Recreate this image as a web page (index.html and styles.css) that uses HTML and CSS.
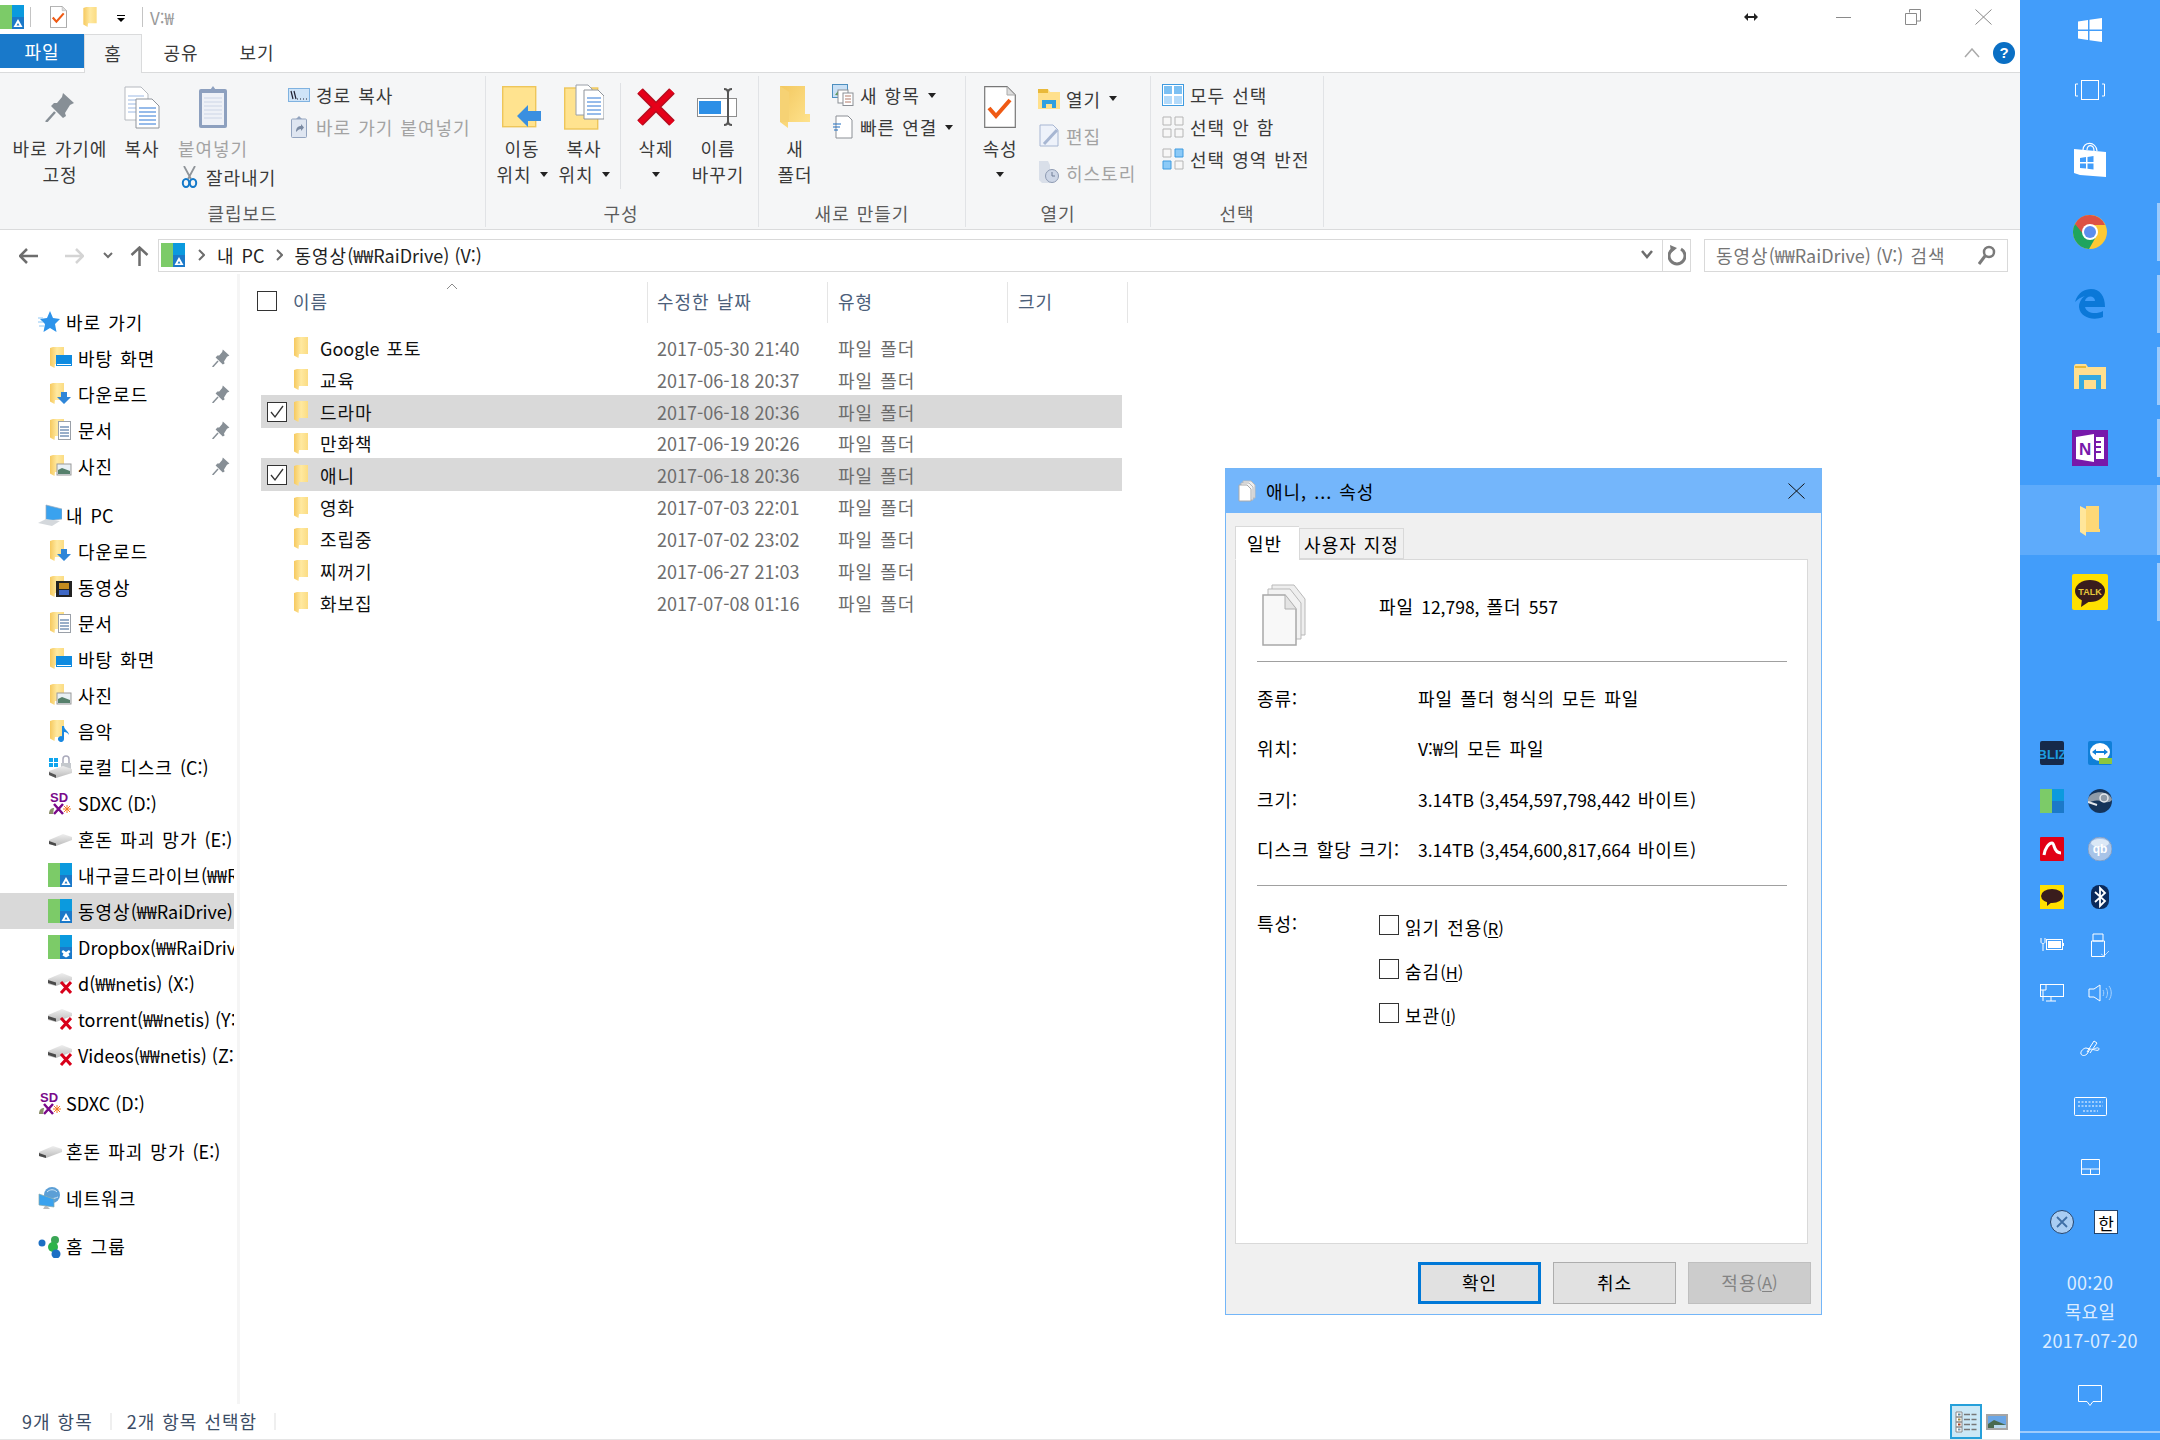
FILE: index.html
```html
<!DOCTYPE html>
<html lang="ko">
<head>
<meta charset="utf-8">
<title>V:₩</title>
<link rel="stylesheet" href="styles.css">
</head>
<body>
<svg class="sprite" aria-hidden="true">
  <defs>
    <linearGradient id="fg" x1="0" x2="1" y1="0" y2="0"><stop offset="0" stop-color="#f6c95f"/><stop offset=".5" stop-color="#ffe9a0"/><stop offset="1" stop-color="#fbdc83"/></linearGradient>
    <linearGradient id="fg2" x1="0" x2="1" y1="0" y2="1"><stop offset="0" stop-color="#f3c860"/><stop offset="1" stop-color="#ffe490"/></linearGradient>
    <linearGradient id="silver" x1="0" x2="0" y1="0" y2="1"><stop offset="0" stop-color="#eee"/><stop offset="1" stop-color="#bbb"/></linearGradient>
  </defs>
  <symbol id="folder" viewBox="0 0 14 21"><path d="M0 1L3 0H14V17H5L4.500 21L0 18.500Z" fill="url(#fg)"/></symbol>
  <symbol id="raid" viewBox="0 0 24 24"><rect width="12" height="24" fill="#7ccb68"/><rect x="12" width="12" height="24" fill="#0b9ade"/><rect x="12" y="12" width="12" height="12" fill="#1b79c9"/><path d="M18 14l4.500 8h-9z" fill="#fff"/><path d="M18 18l-1.500 2.500h3z" fill="#1b79c9"/></symbol>
  <symbol id="raidbox" viewBox="0 0 24 24"><rect width="12" height="24" fill="#7ccb68"/><rect x="12" width="12" height="24" fill="#0b9ade"/><rect x="12" y="12" width="12" height="12" fill="#1b79c9"/><path d="M15 15l3 2 3-2 1.500 2-2 1.500 1 2-3.500 2-3.500-2 1-2-2-1.500z" fill="#fff"/></symbol>
  <symbol id="raidtray" viewBox="0 0 24 24"><rect width="12" height="24" fill="#7ccb68"/><rect x="12" width="12" height="12" fill="#0b9ade"/><rect x="12" y="12" width="12" height="12" fill="#1b79c9"/></symbol>
  <symbol id="pin" viewBox="0 0 30 30"><path d="M18 1L29 11L25 13L20 21L21 24L18 26L6 14L9 11L12 11L17 5Z" fill="#878f96"/><path d="M10 20L1 30" stroke="#878f96" stroke-width="2.500"/></symbol>
  <symbol id="copy" viewBox="0 0 36 43"><path d="M1 1H17L24 8V34H1Z" fill="#fff" stroke="#b5b9bf"/><path d="M4 10H20M4 14H20M4 18H20M4 22H20M4 26H20" stroke="#9cb9e4"/><path d="M12 13H28L35 20V42H12Z" fill="#fff" stroke="#8f949b"/><path d="M15 22H32M15 26H32M15 30H32M15 34H32M15 38H32" stroke="#2f79d6" stroke-width="1.200"/></symbol>
  <symbol id="paste" viewBox="0 0 30 44"><rect x="1" y="4" width="28" height="39" rx="2" fill="#8da0bf"/><rect x="4" y="8" width="22" height="32" fill="#eef1f7"/><path d="M6 13H24M6 17H24M6 21H24M6 25H24M6 29H24M6 33H24" stroke="#ccd5e6"/><path d="M10 8L15 1L20 8Z" fill="#8da0bf"/></symbol>
  <symbol id="pathcopy" viewBox="0 0 22 14"><rect x=".500" y=".500" width="21" height="13" fill="#cfe4f8" stroke="#7fb2e0"/><path d="M3 3l2 8M6 3l2 8M9 11h1M12 11h1M15 11h1M18 11h1" stroke="#223" stroke-width="1.200"/></symbol>
  <symbol id="linkpaste" viewBox="0 0 16 22"><rect x=".500" y="3" width="15" height="18.500" rx="1" fill="#dfe6f1" stroke="#93a4bf"/><path d="M5 3l3-3 3 3z" fill="#93a4bf"/><path d="M5 16c0-4 2-6 5-6V8l3 3.500-3 3.500v-2c-2 0-3 1-5 3z" fill="#7a8aa2"/></symbol>
  <symbol id="scissors" viewBox="0 0 17 22"><path d="M3 0L10 13M14 0L7 13" stroke="#8f9499" stroke-width="1.800" fill="none"/><ellipse cx="5" cy="17" rx="3.200" ry="4" fill="none" stroke="#1479c9" stroke-width="2"/><ellipse cx="12" cy="17" rx="3.200" ry="4" fill="none" stroke="#1479c9" stroke-width="2"/></symbol>
  <symbol id="move" viewBox="0 0 40 42"><rect x=".700" y=".700" width="33" height="40" fill="#ffe38f" stroke="#eec65a" stroke-width="1.400"/><path d="M15 30L26 19V25H39V35H26V41Z" fill="#3a8fe0"/></symbol>
  <symbol id="copyto" viewBox="0 0 40 46"><rect x=".700" y="4" width="33" height="41" fill="#ffe38f" stroke="#eec65a" stroke-width="1.400"/><path d="M12 1H24L28 5V31H12Z" fill="#fff" stroke="#9aa0a8"/><path d="M20 6H34L40 12V35H20Z" fill="#fff" stroke="#8f949b"/><path d="M23 14H37M23 18H37M23 22H37M23 26H37M23 30H37" stroke="#2f79d6"/></symbol>
  <symbol id="del" viewBox="0 0 38 38"><path d="M3 3L35 35M35 3L3 35" stroke="#b50d1f" stroke-width="8"/><path d="M3 3L35 35M35 3L3 35" stroke="#e60019" stroke-width="5"/></symbol>
  <symbol id="rename" viewBox="0 0 43 38"><rect x=".500" y="10.500" width="39" height="18" fill="#fff" stroke="#8d8d8d"/><rect x="2" y="13" width="22" height="13" fill="#2d8fe6"/><path d="M27 1C29 1 31 2 31 5V33C31 36 29 37 27 37M35 1C33 1 31 2 31 5M35 37C33 37 31 36 31 33" fill="none" stroke="#555" stroke-width="2"/></symbol>
  <symbol id="newfolder" viewBox="0 0 30 42"><path d="M0 0H25V28H30V36H8V42L0 36Z" fill="url(#fg2)"/><path d="M0 0L9 6V36L0 36Z" fill="#f6d274"/></symbol>
  <symbol id="newitem" viewBox="0 0 22 22"><rect x=".500" y=".500" width="15" height="13" fill="#c9e0f5" stroke="#4d8fbf"/><path d="M3 11l3-4 3 3 2-2 3 4z" fill="#5b9a5b"/><rect x="6" y="6" width="10" height="13" fill="#fff" stroke="#8b8f95"/><rect x="11" y="9" width="10" height="12.500" fill="#fff" stroke="#8b8f95"/><path d="M13 12h6M13 15h6M13 18h6" stroke="#b37a6a"/></symbol>
  <symbol id="quick" viewBox="0 0 20 24"><path d="M3 1H15L19 5V23H3Z" fill="#fff" stroke="#8b8f95"/><path d="M0 9H8M0 12H7M1 15H5" stroke="#1c6dc0" stroke-width="1.200"/></symbol>
  <symbol id="props" viewBox="0 0 32 42"><path d="M.700.700H23L31.300 9V41.300H.700Z" fill="#fff" stroke="#777" stroke-width="1.200"/><path d="M23 1V9H31" fill="#ddd" stroke="#aaa"/><path d="M5 22L12 30L26 14" fill="none" stroke="#ef5a14" stroke-width="4"/></symbol>
  <symbol id="open" viewBox="0 0 22 20"><path d="M0 0H10L12 3H22V20H0Z" fill="#ffe08c"/><rect x="0" y="0" width="10" height="4" fill="#e9b93a"/><path d="M4 19V11H18V19H14V15H8V19Z" fill="#2f9fe0"/></symbol>
  <symbol id="edit" viewBox="0 0 20 23"><path d="M1 1H14L19 6V22H1Z" fill="#eef2fa" stroke="#a7b6d2"/><path d="M5 20L18 6" stroke="#a7b6d2" stroke-width="3"/></symbol>
  <symbol id="history" viewBox="0 0 20 23"><path d="M0 0H9L11 4V22H3L0 19Z" fill="#d9dfe9"/><circle cx="13" cy="15" r="6.500" fill="#cdd6e6" stroke="#8d9ab2"/><path d="M13 11v4h3" stroke="#6f7d96" fill="none"/></symbol>
  <symbol id="selall" viewBox="0 0 22 22"><rect x=".500" y=".500" width="21" height="21" fill="#fff" stroke="#3f9be0"/><rect x="2" y="2" width="8" height="8" fill="#7cc0f3"/><rect x="12" y="2" width="8" height="8" fill="#7cc0f3"/><rect x="2" y="12" width="8" height="8" fill="#b3dafa"/><rect x="12" y="12" width="8" height="8" fill="#b3dafa"/></symbol>
  <symbol id="selnone" viewBox="0 0 22 22"><path d="M1 1h8v8H1zM13 1h8v8h-8zM1 13h8v8H1zM13 13h8v8h-8z" fill="#f7f7f7" stroke="#b5b5b5"/></symbol>
  <symbol id="selinv" viewBox="0 0 22 22"><path d="M1 1h8v8H1zM13 13h8v8h-8z" fill="#f7f7f7" stroke="#b5b5b5"/><path d="M13 1h8v8h-8zM1 13h8v8H1z" fill="#8ccaf7" stroke="#3f9be0"/></symbol>
  <symbol id="star" viewBox="0 0 24 22"><path d="M12 0L15 7L22 8L17 13L18.500 21L12 17L5.500 21L7 13L2 8L9 7Z" fill="#2d93ea"/><path d="M0 7H5M0 11H5M1 15H6" stroke="#8cc6f5"/></symbol>
  <symbol id="fdesk" viewBox="0 0 22 22"><use href="#folder" width="14" height="21"/><rect x="6" y="8" width="16" height="11" fill="#0f8be0"/><rect x="7" y="17" width="14" height="1" fill="#fff"/></symbol>
  <symbol id="fdown" viewBox="0 0 22 22"><use href="#folder" width="14" height="21"/><path d="M11 9h6v5h4l-7 7-7-7h4z" fill="#2f86d8"/></symbol>
  <symbol id="fdoc" viewBox="0 0 22 22"><use href="#folder" width="14" height="21"/><rect x="8.500" y="2.500" width="12" height="18" fill="#fff" stroke="#9aa0a8"/><path d="M10 8h9M10 11h9M10 14h9M10 17h9" stroke="#335f93"/></symbol>
  <symbol id="fpic" viewBox="0 0 22 22"><use href="#folder" width="14" height="21"/><rect x="7" y="9" width="14" height="11" fill="#e8f0f4" stroke="#9a9a9a"/><path d="M8 19v-4l4-2 8 3v3z" fill="#56806c"/></symbol>
  <symbol id="fvid" viewBox="0 0 22 22"><use href="#folder" width="14" height="21"/><rect x="6" y="5" width="16" height="16" fill="#222"/><rect x="9" y="7" width="10" height="6" fill="#c58c1f"/><rect x="9" y="14" width="10" height="5" fill="#3e67c4"/></symbol>
  <symbol id="fmus" viewBox="0 0 22 22"><use href="#folder" width="14" height="21"/><path d="M12 6h2c0 4 5 5 5 9-1-2-3-3-5-3v7a3 3 0 1 1-2-2.800z" fill="#1a88e0"/></symbol>
  <symbol id="pc" viewBox="0 0 24 24"><path d="M8 2L24 6V16L8 18Z" fill="#3aa2ee" stroke="#9ab" stroke-width=".700"/><path d="M0 20L8 16L22 18L14 23Z" fill="#d4d8dc"/></symbol>
  <symbol id="cdisk" viewBox="0 0 24 24"><path d="M1 3h4v4H1zM6 3h4v4H6zM1 8h4v4H1zM6 8h4v4H6z" fill="#0ea5ee"/><path d="M15 9V4a3 3 0 0 1 6 0v5z" fill="none" stroke="#aab" stroke-width="1.500"/><rect x="13" y="8" width="10" height="8" fill="#c4c8cc"/><path d="M1 16L15 11L24 14V18L8 23L1 20Z" fill="url(#silver)"/><path d="M1 17l7 3v3l-7-3z" fill="#555"/></symbol>
  <symbol id="drive" viewBox="0 0 24 24"><path d="M1 13L15 7L24 10V13L8 19L1 17Z" fill="url(#silver)"/><path d="M1 14l7 2.500v2.500l-7-2z" fill="#4a4a4a"/></symbol>
  <symbol id="netdrive" viewBox="0 0 24 24"><path d="M0 8L14 2L24 6V9L8 15L0 13Z" fill="url(#silver)"/><path d="M0 9l8 2.500v3L0 12z" fill="#4a4a4a"/><path d="M13 11l10 11M23 11L13 22" stroke="#d8001a" stroke-width="3"/></symbol>
  <symbol id="sd" viewBox="0 0 24 24"><path d="M6 13l9 10M15 13L6 23" stroke="#7a0a8a" stroke-width="2.500"/><path d="M1 23c0-4 2-6 5-6l-1 6z" fill="#8a8f6a"/><path d="M19 14v8M15 18h8M16 15l6 6M22 15l-6 6" stroke="#f47a20"/></symbol>
  <symbol id="net" viewBox="0 0 24 24"><circle cx="14" cy="9" r="8" fill="#5c9fd6"/><path d="M9 6c3-3 7-3 10 0M8 11c4 2 8 2 12 0" stroke="#cfe6f7" fill="none"/><path d="M1 8L16 13V21L1 19Z" fill="#3aa2ee" stroke="#8aa" stroke-width=".700"/><path d="M5 23H12L9 20H7Z" fill="#bbb"/></symbol>
  <symbol id="home" viewBox="0 0 24 24"><circle cx="4" cy="9" r="3.500" fill="#1c6fc4"/><circle cx="17" cy="6" r="4" fill="#3aa655"/><circle cx="15" cy="13" r="5" fill="#2db34a"/><circle cx="18" cy="20" r="4.500" fill="#1c6fc4"/></symbol>
  <symbol id="cursor" viewBox="0 0 14 10"><path d="M0 5l4-4v8zM14 5l-4-4v8zM4 4h6v2H4z" fill="#222"/></symbol>
  <symbol id="docs" viewBox="0 0 18 22"><path d="M5 1h8l4 4v13H5z" fill="#eee" stroke="#bbb"/><path d="M3 3h8l4 4v13H3z" fill="#f5f5f5" stroke="#bbb"/><path d="M1 5h8l4 4v12H1z" fill="#fff" stroke="#aaa"/></symbol>
  <symbol id="docsbig" viewBox="0 0 44 62"><path d="M10 1h22l11 14v36H10z" fill="#eee" stroke="#b9b9b9"/><path d="M6 5h22l11 14v36H6z" fill="#f2f2f2" stroke="#b9b9b9"/><path d="M1 11h22l11 14v36H1z" fill="#f8f8f8" stroke="#a8a8a8" stroke-width="1.500"/><path d="M23 11v14h11" fill="#e4e4e4" stroke="#b0b0b0"/></symbol>
  <symbol id="win" viewBox="0 0 24 24"><path d="M0 3.500L10 2V11.500H0ZM11.500 1.800L24 0V11.500H11.500ZM0 13H10V22L0 20.500ZM11.500 13H24V24L11.500 22.200Z" fill="#fff"/></symbol>
  <symbol id="task" viewBox="0 0 30 20"><rect x="6.500" y=".500" width="17" height="19" fill="none" stroke="#fff" stroke-width="1"/><path d="M3 4H.500V16H3M27 4H29.500V16H27" fill="none" stroke="#fff"/></symbol>
  <symbol id="store" viewBox="0 0 32 36"><path d="M0 8L32 11V36L6 34L0 32Z" fill="#fff"/><path d="M9 9C9 0 22 0 23 10M13 9C13 3 20 3 20 10" fill="none" stroke="#fff" stroke-width="1.200"/><path d="M6 17l6-1v5H6zM13.500 16l6-1v6h-6zM6 22.500h6v5l-6-.6zM13.500 22.500h6v6l-6-.7z" fill="#429dfa"/></symbol>
  <symbol id="chrome" viewBox="0 0 34 34"><circle cx="17" cy="17" r="17" fill="#fcc934"/><path d="M17 0A17 17 0 0 0 2 9L9 21L17 10H32A17 17 0 0 0 17 0Z" fill="#dd5144"/><path d="M2 9A17 17 0 0 0 16 34L24 20H11Z" fill="#1fa45f"/><circle cx="17" cy="17" r="8" fill="#fff"/><circle cx="17" cy="17" r="6" fill="#5c8eee"/></symbol>
  <symbol id="edge" viewBox="0 0 30 30"><path d="M0 13C3 3 10 0 16 0C25 0 30 7 30 18H10C11 24 21 26 28 22V28C19 32 5 29 4 18C4 12 8 8 10 7C6 8 3 10 0 13ZM10 12H20C20 6 11 6 10 12Z" fill="#0b78d8"/></symbol>
  <symbol id="explorer" viewBox="0 0 32 25"><path d="M0 3C0 1 1 0 2 0H12L14 3H32V25H0Z" fill="#ffdf8e"/><path d="M1 2H12V4H1Z" fill="#e9b93a"/><path d="M5 25V11H27V25H22V16H10V25Z" fill="#34a9e0"/></symbol>
  <symbol id="onenote" viewBox="0 0 36 36"><rect width="36" height="36" fill="#7719aa"/><path d="M4 7L22 4V32L4 29Z" fill="#fff"/><path d="M24 7H32V29H24Z" fill="#fff"/><path d="M24 12h5M24 17h5M24 22h5" stroke="#7719aa" stroke-width="2"/></symbol>
  <symbol id="tbfolder" viewBox="0 0 20 31"><path d="M6 1H19V24H20V27H6Z" fill="#fdd877"/><path d="M0 1L6 4V31L0 27Z" fill="#ffe69a"/></symbol>
  <symbol id="kakao" viewBox="0 0 36 36"><rect width="36" height="36" rx="2" fill="#ffe000"/><ellipse cx="18" cy="17" rx="15" ry="11" fill="#3a1d1d"/><path d="M10 25L9 33L18 27Z" fill="#3a1d1d"/></symbol>
  <symbol id="bliz" viewBox="0 0 24 24"><rect width="24" height="24" rx="2" fill="#16294a"/></symbol>
  <symbol id="tv" viewBox="0 0 24 24"><rect width="24" height="24" rx="2" fill="#0f7fd8"/><ellipse cx="12" cy="11" rx="10" ry="9" fill="#fff"/><path d="M4 11l4-3v2h8V8l4 3-4 3v-2H8v2z" fill="#0f7fd8"/><rect x="11" y="17" width="13" height="6" fill="#8cc63f"/></symbol>
  <symbol id="steam" viewBox="0 0 24 24"><ellipse cx="12" cy="12" rx="12" ry="12" fill="#14345a"/><path d="M0 10C2 2 20 0 24 10C24 14 16 14 12 12C8 11 4 12 0 14Z" fill="#8e9ba8"/><circle cx="16" cy="9" r="4" fill="none" stroke="#e4e8ec" stroke-width="1.500"/><path d="M0 13l9 3" stroke="#e4e8ec" stroke-width="2"/></symbol>
  <symbol id="avira" viewBox="0 0 24 24"><rect width="24" height="24" rx="1" fill="#e10015"/><path d="M4 18C5 11 9 6 12 6C15 6 13 16 21 16" fill="none" stroke="#fff" stroke-width="3"/></symbol>
  <symbol id="qb" viewBox="0 0 24 24"><ellipse cx="12" cy="12" rx="12" ry="12" fill="#a8c4e8" stroke="#7f9fc8"/><ellipse cx="12" cy="6" rx="9" ry="4" fill="#dbe8f6"/></symbol>
  <symbol id="ktray" viewBox="0 0 24 24"><rect width="24" height="24" fill="#ffe000"/><ellipse cx="12" cy="11" rx="11" ry="7" fill="#3a1d1d"/><path d="M7 16L7 21L12 17Z" fill="#3a1d1d"/></symbol>
  <symbol id="bt" viewBox="0 0 18 24"><rect width="18" height="24" rx="8" fill="#0a2a5c"/><path d="M4 7L14 16L9 21V3L14 8L4 17" fill="none" stroke="#fff" stroke-width="1.800"/></symbol>
  <symbol id="batt" viewBox="0 0 24 16"><path d="M1 1V5C1 7 5 7 5 5V1M3 7V14" fill="none" stroke="#fff"/><rect x="6.500" y="2.500" width="16" height="10" fill="none" stroke="#fff"/><rect x="8" y="4" width="13" height="7" fill="#fff"/><rect x="23" y="6" width="1" height="3" fill="#fff"/></symbol>
  <symbol id="usb" viewBox="0 0 20 24"><path d="M1.500 8H14.500V23.500H1.500ZM3 1H13V8H3Z" fill="none" stroke="#fff"/><path d="M11 21l3 2 5-5" fill="none" stroke="#d6eaff" stroke-width=".800"/></symbol>
  <symbol id="mon" viewBox="0 0 24 18"><rect x=".500" y=".500" width="23" height="12" fill="none" stroke="#fff"/><path d="M.500.500H6V6H.500zM3 6v11M6 17h10M11 13v4" fill="none" stroke="#fff"/></symbol>
  <symbol id="vol" viewBox="0 0 24 18"><path d="M1 5H6L12 1V17L6 13H1Z" fill="none" stroke="#fff"/><path d="M15 6c1 2 1 4 0 6M18 4c2 3 2 7 0 10M21 2c3 4 3 10 0 14" fill="none" stroke="#a8d2fc"/></symbol>
  <symbol id="pen" viewBox="0 0 20 16"><path d="M1 14c-1-3 3-6 5-6l4 1-3 5c-2 2-5 2-6 0zM7 12L14 1l3 2-7 10M10 9c3 0 9 3 9 0 0-2-3-1-5 0" fill="none" stroke="#fff"/></symbol>
  <symbol id="kb" viewBox="0 0 33 19"><rect x=".500" y=".500" width="32" height="18" rx="1" fill="none" stroke="#fff"/><path d="M4 5h25M4 9h25M9 14h15" stroke="#fff" stroke-dasharray="2 1.500"/></symbol>
  <symbol id="pad" viewBox="0 0 19 16"><path d="M.500.500h18v15H.500zM.500 10h18M9.500 10v5.500" fill="none" stroke="#fff"/></symbol>
  <symbol id="xc" viewBox="0 0 24 24"><ellipse cx="12" cy="12" rx="11.500" ry="11.500" fill="#a9cdf3" stroke="#24446c"/><path d="M7 7l10 10M17 7L7 17" stroke="#3f6fa6" stroke-width="1.800"/></symbol>
  <symbol id="bubble" viewBox="0 0 24 22"><path d="M.500.500H23.500V16.500H15L12 20.500L9 16.500H.500Z" fill="none" stroke="#fff"/></symbol>
  <symbol id="viewlist" viewBox="0 0 22 22"><path d="M1 1h6v5H1zM1 6h6v5H1zM1 11h6v5H1zM1 16h6v5H1z" fill="#fff" stroke="#888"/><path d="M9 3.500h6M16.500 3.500h5M9 8.500h6M16.500 8.500h5M9 13.500h6M16.500 13.500h5M9 18.500h6M16.500 18.500h5" stroke="#777" stroke-width="1.500"/><rect x="3" y="2.500" width="2.500" height="2" fill="#5a8a9a"/><rect x="3" y="7.500" width="2.500" height="2" fill="#a08a40"/><rect x="3" y="12.500" width="2.500" height="2" fill="#a84020"/><rect x="3" y="17.500" width="2.500" height="2" fill="#7a9aaa"/></symbol>
  <symbol id="viewpic" viewBox="0 0 22 16"><rect x="1" y="1" width="20" height="14" fill="#6aa6e6" stroke="#a5a5a5" stroke-width="2"/><path d="M2 10l6-4 12 5v3H2z" fill="#486a50"/><path d="M8 11l12 0v3H8z" fill="#b8d8ee"/></symbol>
</svg>

<div class="screen">
  <div class="explorer">
    <header class="titlebar">
      <svg class="qa-app" width="24" height="24"><use href="#raid"/></svg>
      <span class="qa-sep"></span>
      <svg class="qa-props" width="17" height="22"><use href="#props"/></svg>
      <svg class="qa-folder" width="14" height="20"><use href="#folder"/></svg>
      <span class="qa-more"></span>
      <span class="qa-sep qa-sep2"></span>
      <span class="title-path">V:₩</span>
      <svg class="win-cursor" width="14" height="10"><use href="#cursor"/></svg>
      <span class="win-min"></span>
      <svg class="win-restore" width="16" height="16" viewBox="0 0 16 16"><path d="M4.500 3.500V.500H15.500V12H12M.500 4.500H11.500V15.500H.500Z" fill="none" stroke="#8a8a8a"/></svg>
      <svg class="win-close" width="17" height="16" viewBox="0 0 17 16"><path d="M.500.500L16.500 15.500M16.500.500L.500 15.500" stroke="#8a8a8a"/></svg>
    </header>

    <nav class="tabbar">
      <span class="rtab rtab-file">파일</span>
      <span class="rtab rtab-home">홈</span>
      <span class="rtab rtab-share">공유</span>
      <span class="rtab rtab-view">보기</span>
      <svg class="collapse" width="16" height="10" viewBox="0 0 16 10"><path d="M1 9L8 1L15 9" fill="none" stroke="#aaa" stroke-width="1.500"/></svg>
      <span class="help">?</span>
    </nav>

    <section class="ribbon">
      <div class="group group-clip">
        <div class="clip-grid">
          <div class="big big-pin"><span class="big-icon"><svg width="30" height="30"><use href="#pin"/></svg></span><span class="ln">바로 가기에</span><span class="ln">고정</span></div>
          <div class="big big-copy"><span class="big-icon"><svg width="36" height="43"><use href="#copy"/></svg></span><span class="ln">복사</span></div>
          <div class="big big-paste off"><span class="big-icon"><svg width="30" height="44"><use href="#paste"/></svg></span><span class="ln">붙여넣기</span></div>
          <div class="smalls clip-smalls">
            <div class="small"><span class="s-ico"><svg width="22" height="14"><use href="#pathcopy"/></svg></span>경로 복사</div>
            <div class="small off"><span class="s-ico"><svg width="16" height="22"><use href="#linkpaste"/></svg></span>바로 가기 붙여넣기</div>
          </div>
          <div class="small cut"><span class="s-ico s-ico-cut"><svg width="17" height="22"><use href="#scissors"/></svg></span>잘라내기</div>
        </div>
        <div class="g-label">클립보드</div>
      </div>

      <div class="group group-org">
        <div class="g-body">
          <div class="big w62"><span class="big-icon"><svg width="40" height="42"><use href="#move"/></svg></span><span class="ln">이동</span><span class="ln">위치<i class="caret caret-side"></i></span></div>
          <div class="big w62"><span class="big-icon"><svg width="40" height="46"><use href="#copyto"/></svg></span><span class="ln">복사</span><span class="ln">위치<i class="caret caret-side"></i></span></div>
          <span class="inner-sep"></span>
          <div class="big w60"><span class="big-icon"><svg width="38" height="38"><use href="#del"/></svg></span><span class="ln">삭제</span><span class="ln"><i class="caret"></i></span></div>
          <div class="big w60 rename"><span class="big-icon"><svg width="43" height="38"><use href="#rename"/></svg></span><span class="ln">이름</span><span class="ln">바꾸기</span></div>
        </div>
        <div class="g-label">구성</div>
      </div>

      <div class="group group-new">
        <div class="g-body">
          <div class="big w50"><span class="big-icon"><svg width="30" height="42"><use href="#newfolder"/></svg></span><span class="ln">새</span><span class="ln">폴더</span></div>
          <div class="smalls new-smalls">
            <div class="small"><span class="s-ico"><svg width="22" height="22"><use href="#newitem"/></svg></span>새 항목<i class="caret caret-side"></i></div>
            <div class="small"><span class="s-ico"><svg width="20" height="24"><use href="#quick"/></svg></span>빠른 연결<i class="caret caret-side"></i></div>
          </div>
        </div>
        <div class="g-label">새로 만들기</div>
      </div>

      <div class="group group-open">
        <div class="g-body">
          <div class="big w60"><span class="big-icon"><svg width="32" height="42"><use href="#props"/></svg></span><span class="ln">속성</span><span class="ln"><i class="caret"></i></span></div>
          <div class="smalls open-smalls">
            <div class="small"><span class="s-ico"><svg width="22" height="20"><use href="#open"/></svg></span>열기<i class="caret caret-side"></i></div>
            <div class="small off"><span class="s-ico"><svg width="20" height="23"><use href="#edit"/></svg></span>편집</div>
            <div class="small off"><span class="s-ico"><svg width="20" height="23"><use href="#history"/></svg></span>히스토리</div>
          </div>
        </div>
        <div class="g-label">열기</div>
      </div>

      <div class="group group-sel">
        <div class="g-body">
          <div class="smalls sel-smalls">
            <div class="small"><span class="s-ico"><svg width="22" height="22"><use href="#selall"/></svg></span>모두 선택</div>
            <div class="small"><span class="s-ico"><svg width="22" height="22"><use href="#selnone"/></svg></span>선택 안 함</div>
            <div class="small"><span class="s-ico"><svg width="22" height="22"><use href="#selinv"/></svg></span>선택 영역 반전</div>
          </div>
        </div>
        <div class="g-label">선택</div>
      </div>
    </section>

    <div class="addressbar">
      <div class="nav-btns">
        <svg class="nb-back" width="19" height="16" viewBox="0 0 19 16"><path d="M8 1L1 8L8 15M1 8H19" fill="none" stroke="#6d6d6d" stroke-width="2.500"/></svg>
        <svg class="nb-fwd" width="19" height="16" viewBox="0 0 19 16"><path d="M11 1L18 8L11 15M18 8H0" fill="none" stroke="#d4d4d4" stroke-width="2.500"/></svg>
        <svg class="nb-down" width="10" height="7" viewBox="0 0 10 7"><path d="M1 1L5 5L9 1" fill="none" stroke="#6d6d6d" stroke-width="2"/></svg>
        <svg class="nb-up" width="19" height="20" viewBox="0 0 19 20"><path d="M1.500 9L9.500 1.500L17.500 9M9.500 2V20" fill="none" stroke="#6d6d6d" stroke-width="2.500"/></svg>
      </div>
      <div class="addr-box">
        <svg class="addr-ico" width="24" height="24"><use href="#raid"/></svg>
        <svg class="crumb-arrow" width="7" height="12" viewBox="0 0 7 12"><path d="M1 1L6 6L1 11" fill="none" stroke="#6d6d6d" stroke-width="2"/></svg>
        <span class="crumb">내 <span class="lat">PC</span></span>
        <svg class="crumb-arrow" width="7" height="12" viewBox="0 0 7 12"><path d="M1 1L6 6L1 11" fill="none" stroke="#6d6d6d" stroke-width="2"/></svg>
        <span class="crumb">동영상<span class="lat">(₩₩RaiDrive) (V:)</span></span>
        <svg class="addr-drop" width="12" height="9" viewBox="0 0 12 9"><path d="M1 1L6 7L11 1" fill="none" stroke="#6d6d6d" stroke-width="2.500"/></svg>
        <span class="addr-refresh"><svg width="18" height="22" viewBox="0 0 18 22"><path d="M5 4A8 8 0 1 0 13 4" fill="none" stroke="#7a7a7a" stroke-width="3"/><path d="M2 0L9 3L3 8Z" fill="#7a7a7a"/></svg></span>
      </div>
      <div class="search-box">
        <span class="search-text">동영상<span class="lat">(₩₩RaiDrive) (V:)</span> 검색</span>
        <svg width="18" height="20" viewBox="0 0 18 20"><circle cx="11" cy="7" r="5" fill="none" stroke="#7a7a7a" stroke-width="2.500"/><path d="M7 11L1 19" stroke="#7a7a7a" stroke-width="3"/></svg>
      </div>
    </div>

    <main class="main">
      <aside class="nav">
        <div class="nrow top"><span class="n-ico"><svg width="24" height="22"><use href="#star"/></svg></span>바로 가기</div>
        <div class="nrow"><span class="n-ico"><svg width="22" height="22"><use href="#fdesk"/></svg></span>바탕 화면<svg class="n-pin" width="18" height="18"><use href="#pin"/></svg></div>
        <div class="nrow"><span class="n-ico"><svg width="22" height="22"><use href="#fdown"/></svg></span>다운로드<svg class="n-pin" width="18" height="18"><use href="#pin"/></svg></div>
        <div class="nrow"><span class="n-ico"><svg width="22" height="22"><use href="#fdoc"/></svg></span>문서<svg class="n-pin" width="18" height="18"><use href="#pin"/></svg></div>
        <div class="nrow"><span class="n-ico"><svg width="22" height="22"><use href="#fpic"/></svg></span>사진<svg class="n-pin" width="18" height="18"><use href="#pin"/></svg></div>

        <div class="nrow top gap"><span class="n-ico"><svg width="24" height="24"><use href="#pc"/></svg></span>내 <span class="lat">PC</span></div>
        <div class="nrow"><span class="n-ico"><svg width="22" height="22"><use href="#fdown"/></svg></span>다운로드</div>
        <div class="nrow"><span class="n-ico"><svg width="22" height="22"><use href="#fvid"/></svg></span>동영상</div>
        <div class="nrow"><span class="n-ico"><svg width="22" height="22"><use href="#fdoc"/></svg></span>문서</div>
        <div class="nrow"><span class="n-ico"><svg width="22" height="22"><use href="#fdesk"/></svg></span>바탕 화면</div>
        <div class="nrow"><span class="n-ico"><svg width="22" height="22"><use href="#fpic"/></svg></span>사진</div>
        <div class="nrow"><span class="n-ico"><svg width="22" height="22"><use href="#fmus"/></svg></span>음악</div>
        <div class="nrow"><span class="n-ico"><svg width="24" height="24"><use href="#cdisk"/></svg></span>로컬 디스크 <span class="lat">(C:)</span></div>
        <div class="nrow"><span class="n-ico"><svg width="24" height="24"><use href="#sd"/><text x="2" y="11" class="sd-t">SD</text></svg></span><span class="lat">SDXC (D:)</span></div>
        <div class="nrow"><span class="n-ico"><svg width="24" height="24"><use href="#drive"/></svg></span>혼돈 파괴 망가 <span class="lat">(E:)</span></div>
        <div class="nrow"><span class="n-ico"><svg width="24" height="24"><use href="#raid"/></svg></span>내구글드라이브<span class="lat">(₩₩RaiDrive) (U:)</span></div>
        <div class="nrow sel"><span class="n-ico"><svg width="24" height="24"><use href="#raid"/></svg></span>동영상<span class="lat">(₩₩RaiDrive) (V:)</span></div>
        <div class="nrow"><span class="n-ico"><svg width="24" height="24"><use href="#raidbox"/></svg></span><span class="lat">Dropbox(₩₩RaiDrive) (W:)</span></div>
        <div class="nrow"><span class="n-ico"><svg width="24" height="24"><use href="#netdrive"/></svg></span><span class="lat">d(₩₩netis) (X:)</span></div>
        <div class="nrow"><span class="n-ico"><svg width="24" height="24"><use href="#netdrive"/></svg></span><span class="lat">torrent(₩₩netis) (Y:)</span></div>
        <div class="nrow"><span class="n-ico"><svg width="24" height="24"><use href="#netdrive"/></svg></span><span class="lat">Videos(₩₩netis) (Z:)</span></div>

        <div class="nrow top gap"><span class="n-ico"><svg width="24" height="24"><use href="#sd"/><text x="2" y="11" class="sd-t">SD</text></svg></span><span class="lat">SDXC (D:)</span></div>
        <div class="nrow top gap2"><span class="n-ico"><svg width="24" height="24"><use href="#drive"/></svg></span>혼돈 파괴 망가 <span class="lat">(E:)</span></div>
        <div class="nrow top gap2"><span class="n-ico"><svg width="24" height="24"><use href="#net"/></svg></span>네트워크</div>
        <div class="nrow top gap2"><span class="n-ico"><svg width="24" height="24"><use href="#home"/></svg></span>홈 그룹</div>
      </aside>

      <section class="content">
        <div class="colhead">
          <div class="hc hc-name"><span class="box box-head"></span><span class="hc-text">이름</span>
            <svg class="sort" width="12" height="7" viewBox="0 0 12 7"><path d="M1 6L6 1L11 6" fill="none" stroke="#8a8a8a"/></svg>
          </div>
          <div class="hc hc-date"><span class="hc-text">수정한 날짜</span></div>
          <div class="hc hc-type"><span class="hc-text">유형</span></div>
          <div class="hc hc-size"><span class="hc-text">크기</span></div>
        </div>
        <div class="list">
          <div class="frow"><div class="fname"><span class="box hide"></span><svg class="fico" width="14" height="21"><use href="#folder"/></svg><span><span class="lat">Google</span> 포토</span></div><div class="fdate">2017-05-30 21:40</div><div class="ftype">파일 폴더</div></div>
          <div class="frow"><div class="fname"><span class="box hide"></span><svg class="fico" width="14" height="21"><use href="#folder"/></svg><span>교육</span></div><div class="fdate">2017-06-18 20:37</div><div class="ftype">파일 폴더</div></div>
          <div class="frow picked"><div class="fname"><span class="box"><svg width="18" height="18" viewBox="0 0 18 18"><path d="M3 9L7 14L15 3" fill="none" stroke="#333" stroke-width="1.300"/></svg></span><svg class="fico" width="14" height="21"><use href="#folder"/></svg><span>드라마</span></div><div class="fdate">2017-06-18 20:36</div><div class="ftype">파일 폴더</div></div>
          <div class="frow"><div class="fname"><span class="box hide"></span><svg class="fico" width="14" height="21"><use href="#folder"/></svg><span>만화책</span></div><div class="fdate">2017-06-19 20:26</div><div class="ftype">파일 폴더</div></div>
          <div class="frow picked"><div class="fname"><span class="box"><svg width="18" height="18" viewBox="0 0 18 18"><path d="M3 9L7 14L15 3" fill="none" stroke="#333" stroke-width="1.300"/></svg></span><svg class="fico" width="14" height="21"><use href="#folder"/></svg><span>애니</span></div><div class="fdate">2017-06-18 20:36</div><div class="ftype">파일 폴더</div></div>
          <div class="frow"><div class="fname"><span class="box hide"></span><svg class="fico" width="14" height="21"><use href="#folder"/></svg><span>영화</span></div><div class="fdate">2017-07-03 22:01</div><div class="ftype">파일 폴더</div></div>
          <div class="frow"><div class="fname"><span class="box hide"></span><svg class="fico" width="14" height="21"><use href="#folder"/></svg><span>조립중</span></div><div class="fdate">2017-07-02 23:02</div><div class="ftype">파일 폴더</div></div>
          <div class="frow"><div class="fname"><span class="box hide"></span><svg class="fico" width="14" height="21"><use href="#folder"/></svg><span>찌꺼기</span></div><div class="fdate">2017-06-27 21:03</div><div class="ftype">파일 폴더</div></div>
          <div class="frow"><div class="fname"><span class="box hide"></span><svg class="fico" width="14" height="21"><use href="#folder"/></svg><span>화보집</span></div><div class="fdate">2017-07-08 01:16</div><div class="ftype">파일 폴더</div></div>
        </div>
      </section>
    </main>

    <footer class="status">
      <span class="st-item st-first">9개 항목</span><span class="st-sep"></span>
      <span class="st-item">2개 항목 선택함</span><span class="st-sep"></span>
      <span class="st-view on"><svg width="22" height="22"><use href="#viewlist"/></svg></span>
      <span class="st-view"><svg width="22" height="16"><use href="#viewpic"/></svg></span>
    </footer>

    <div class="dialog">
      <div class="d-title">
        <svg width="18" height="22"><use href="#docs"/></svg>
        <span class="d-title-text">애니, ... 속성</span>
        <svg class="d-close" width="17" height="16" viewBox="0 0 17 16"><path d="M.500.500L16.500 15.500M16.500.500L.500 15.500" stroke="#111"/></svg>
      </div>
      <div class="d-tabs">
        <span class="d-tab active">일반</span>
        <span class="d-tab">사용자 지정</span>
      </div>
      <div class="d-panel">
        <div class="d-head">
          <svg class="d-big" width="44" height="62"><use href="#docsbig"/></svg>
          <span class="d-count">파일 <span class="lat">12,798,</span> 폴더 <span class="lat">557</span></span>
        </div>
        <div class="d-line"></div>
        <div class="d-props">
          <div class="d-row"><span class="d-k">종류:</span><span>파일 폴더 형식의 모든 파일</span></div>
          <div class="d-row"><span class="d-k">위치:</span><span><span class="lat">V:₩</span>의 모든 파일</span></div>
          <div class="d-row"><span class="d-k">크기:</span><span><span class="lat">3.14TB (3,454,597,798,442</span> 바이트<span class="lat">)</span></span></div>
          <div class="d-row"><span class="d-k">디스크 할당 크기:</span><span><span class="lat">3.14TB (3,454,600,817,664</span> 바이트<span class="lat">)</span></span></div>
        </div>
        <div class="d-line d-line2"></div>
        <div class="d-attrs">
          <span class="d-attr-label">특성:</span>
          <div class="d-checks">
            <label class="d-check"><span class="box"></span><span class="d-check-t">읽기 전용<span class="lat">(<u>R</u>)</span></span></label>
            <label class="d-check"><span class="box"></span><span class="d-check-t">숨김<span class="lat">(<u>H</u>)</span></span></label>
            <label class="d-check"><span class="box"></span><span class="d-check-t">보관<span class="lat">(<u>I</u>)</span></span></label>
          </div>
        </div>
      </div>
      <div class="d-btns">
        <span class="btn primary">확인</span>
        <span class="btn">취소</span>
        <span class="btn disabled">적용<span class="lat">(<u>A</u>)</span></span>
      </div>
    </div>
  </div>

  <aside class="taskbar">
    <div class="tb tb-win"><svg width="24" height="24"><use href="#win"/></svg></div>
    <div class="tb tb-task"><svg width="30" height="20"><use href="#task"/></svg></div>
    <div class="tb tb-store"><svg width="32" height="36"><use href="#store"/></svg></div>
    <div class="tb run"><svg width="34" height="34"><use href="#chrome"/></svg></div>
    <div class="tb run"><svg width="30" height="32"><use href="#edge"/></svg></div>
    <div class="tb run"><svg width="32" height="25"><use href="#explorer"/></svg></div>
    <div class="tb run"><svg width="36" height="36"><use href="#onenote"/><text x="7" y="25" class="on-t">N</text></svg></div>
    <div class="tb run active"><svg width="20" height="31"><use href="#tbfolder"/></svg></div>
    <div class="tb run"><svg width="36" height="36"><use href="#kakao"/><text x="18" y="21" class="tk-t">TALK</text></svg></div>

    <div class="tray">
      <span class="t-cell"><svg width="24" height="24"><use href="#bliz"/><text x="12" y="18" class="bl-t">BLIZ</text></svg></span>
      <span class="t-cell"><svg width="24" height="24"><use href="#tv"/></svg></span>
      <span class="t-cell"><svg width="24" height="24"><use href="#raidtray"/></svg></span>
      <span class="t-cell"><svg width="24" height="24"><use href="#steam"/></svg></span>
      <span class="t-cell"><svg width="24" height="24"><use href="#avira"/></svg></span>
      <span class="t-cell"><svg width="24" height="24"><use href="#qb"/><text x="12" y="16" class="qb-t">qb</text></svg></span>
      <span class="t-cell"><svg width="24" height="24"><use href="#ktray"/></svg></span>
      <span class="t-cell"><svg width="18" height="24"><use href="#bt"/></svg></span>
      <span class="t-cell"><svg width="24" height="16"><use href="#batt"/></svg></span>
      <span class="t-cell"><svg width="20" height="24"><use href="#usb"/></svg></span>
      <span class="t-cell"><svg width="24" height="18"><use href="#mon"/></svg></span>
      <span class="t-cell"><svg width="24" height="18"><use href="#vol"/></svg></span>
    </div>
    <div class="t-single t-pen"><svg width="20" height="16"><use href="#pen"/></svg></div>
    <div class="t-single"><svg width="33" height="19"><use href="#kb"/></svg></div>
    <div class="t-single t-pad"><svg width="19" height="16"><use href="#pad"/></svg></div>
    <div class="ime">
      <svg width="24" height="24"><use href="#xc"/></svg>
      <span class="ime-han">한</span>
    </div>
    <div class="clock">
      <span>00:20</span>
      <span>목요일</span>
      <span>2017-07-20</span>
    </div>
    <svg class="notif" width="24" height="22"><use href="#bubble"/></svg>
    <div class="tb-line"></div>
  </aside>
</div>
</body>
</html>
```

FILE: styles.css
```css
* { box-sizing: border-box; }
html, body { margin: 0; padding: 0; background: #fff; }
body {
  font-family: "Noto Sans CJK KR", "Noto Sans", sans-serif;
  font-size: 18px;
  letter-spacing: 1px;
  word-spacing: 1px;
  color: #000;
  width: 2160px;
  height: 1440px;
  overflow: hidden;
}
svg { display: block; flex: none; }
.sprite { position: absolute; width: 0; height: 0; }
.sd-t { font: bold 13px "Liberation Sans", sans-serif; fill: #7a0a8a; letter-spacing: 0; }
.on-t { font: bold 17px "Liberation Sans", sans-serif; fill: #7719aa; letter-spacing: 0; }
.tk-t { font: bold 9px "Liberation Sans", sans-serif; fill: #e6c83c; text-anchor: middle; letter-spacing: 0; }
.bl-t { font: bold 13px "Liberation Sans", sans-serif; fill: #1d9ce0; text-anchor: middle; letter-spacing: 0; }
.qb-t { font: bold 12px "Liberation Sans", sans-serif; fill: #fff; text-anchor: middle; letter-spacing: 0; }
.lat { font-size: 18px; letter-spacing: 0; word-spacing: 0; }
u { text-underline-offset: 2px; }

.screen { display: flex; width: 2160px; height: 1440px; }
.explorer { position: relative; width: 2020px; height: 1440px; display: flex; flex-direction: column; }

/* title bar */
.titlebar { height: 34px; display: flex; align-items: center; flex: none; }
.qa-sep { width: 1px; height: 20px; background: #c4c4c4; margin-left: 6px; }
.qa-props { margin-left: 19px; }
.qa-folder { margin-left: 16px; }
.qa-more { width: 8px; height: 8px; margin-left: 20px; margin-top: 4px; border-top: 1px solid #000; }
.qa-more::after { content: ""; display: block; margin-top: 2px; border: 4px solid transparent; border-top-color: #000; border-bottom: 0; }
.qa-sep2 { margin-left: 17px; }
.title-path { margin-left: 7px; color: #9a9a9a; font-size: 17px; letter-spacing: 0; }
.win-cursor { margin-left: 1570px; }
.win-min { width: 15px; height: 1px; background: #8a8a8a; margin-left: 78px; }
.win-restore { margin-left: 54px; }
.win-close { margin-left: 54px; }

/* ribbon tabs */
.tabbar { height: 38px; flex: none; display: flex; align-items: flex-start; position: relative; }
.rtab { display: flex; align-items: center; justify-content: center; height: 38px; color: #3a3a3a; padding-bottom: 2px; }
.rtab-file { width: 84px; height: 34px; padding-bottom: 0; background: #1979ca; color: #fff; }
.rtab-home { width: 58px; background: #f5f6f7; border: 1px solid #dadbdc; border-bottom: 0; margin-bottom: -1px; height: 39px; position: relative; z-index: 1; }
.rtab-share { width: 78px; }
.rtab-view { width: 74px; }
.collapse { margin: 14px 0 0 1670px; }
.help { width: 22px; height: 22px; margin: 8px 0 0 13px; border-radius: 50%; background: #0a6fc4; color: #fff; font: bold 15px/22px "Liberation Sans", sans-serif; text-align: center; letter-spacing: 0; }

/* ribbon */
.ribbon { height: 158px; flex: none; background: #f5f6f7; border-top: 1px solid #dadbdc; border-bottom: 1px solid #dadbdc; display: flex; padding: 3px 0 2px; color: #3a3a3a; }
.group { position: relative; display: flex; flex-direction: column; border-right: 1px solid #e1e3e6; flex: none; height: 151px; }
.group-clip { width: 486px; }
.group-org { width: 273px; padding-left: 5px; }
.group-new { width: 207px; padding-left: 11px; }
.group-open { width: 185px; padding-left: 4px; }
.group-sel { width: 173px; padding-left: 11px; }
.g-body { display: flex; height: 126px; padding-top: 3px; }
.g-label { height: 25px; line-height: 25px; text-align: center; color: #5c5c5c; margin-top: -1px; }
.group-org .g-label { padding-right: 7px; }
.group-new .g-label { padding-right: 11px; }
.group-open .g-label { padding-right: 4px; }
.group-sel .g-label { padding-right: 11px; }

.clip-grid { display: grid; height: 126px; padding-top: 3px; grid-template-columns: 120px 44px 98px 1fr; grid-template-rows: 56px 26px 32px; }
.big { display: flex; flex-direction: column; align-items: center; white-space: nowrap; }
.big-icon { height: 56px; display: flex; align-items: center; justify-content: center; }
.ln { height: 26px; line-height: 26px; display: flex; align-items: center; justify-content: center; }
.big-pin, .big-copy { grid-row: 1 / 4; }
.big-paste { grid-row: 1 / 3; }
.w62 { width: 62px; flex: none; }
.w60 { width: 60px; flex: none; }
.w50 { width: 50px; flex: none; }
.rename { margin-left: 2px; }
.inner-sep { width: 1px; height: 106px; background: #dfe1e4; margin: 4px 5px 0 5px; flex: none; }
.off { color: #a3a3a3; }
.smalls { display: flex; flex-direction: column; }
.clip-smalls { grid-column: 4; grid-row: 1 / 3; padding-left: 26px; }
.new-smalls { margin-left: 12px; }
.open-smalls { margin-left: 8px; padding-top: 1px; }
.open-smalls .small { height: 37px; }
.small { height: 32px; display: flex; align-items: center; white-space: nowrap; }
.s-ico { width: 22px; margin-right: 6px; display: flex; align-items: center; justify-content: center; }
.cut { grid-column: 3 / 5; grid-row: 3; padding-left: 17px; }
.s-ico-cut { width: 17px; margin-right: 8px; }
.caret { display: inline-block; width: 0; height: 0; border: 4px solid transparent; border-top: 5px solid #222; border-bottom: 0; }
.caret-side { margin-left: 8px; }

/* address bar */
.addressbar { height: 44px; flex: none; display: flex; padding-top: 9px; align-items: flex-start; }
.nav-btns { display: flex; align-items: center; height: 33px; padding-left: 19px; width: 158px; flex: none; }
.nb-fwd { margin-left: 27px; }
.nb-down { margin-left: 19px; }
.nb-up { margin-left: 17px; }
.addr-box { width: 1533px; height: 33px; border: 1px solid #d9d9d9; padding-bottom: 2px; display: flex; align-items: center; flex: none; color: #222; }
.addr-ico { margin-left: 2px; }
.crumb-arrow { margin-left: 13px; }
.crumb { margin-left: 12px; }
.crumb + .crumb-arrow { margin-left: 11px; }
.addr-drop { margin-left: auto; margin-right: 9px; }
.addr-refresh { width: 28px; height: 33px; margin-bottom: -2px; border-left: 1px solid #d9d9d9; display: flex; align-items: center; justify-content: center; }
.search-box { width: 304px; height: 33px; margin-left: 13px; border: 1px solid #d9d9d9; display: flex; align-items: center; justify-content: space-between; padding: 0 11px 2px; color: #757575; }
.search-text { white-space: nowrap; }

/* main */
.main { flex: 1; display: flex; min-height: 0; }
.nav { width: 240px; flex: none; border-right: 3px solid #f5f5f5; padding-top: 30px; }
.nrow { height: 36px; width: 234px; display: flex; align-items: center; padding-left: 48px; white-space: pre; overflow: hidden; }
.n-ico { width: 24px; height: 24px; margin-right: 6px; display: flex; align-items: center; justify-content: flex-start; flex: none; }
.n-ico svg { margin-left: 2px; }
.nrow .n-ico svg[height="24"] { margin-left: 0; }
.nrow.top { padding-left: 38px; }
.nrow.top .n-ico { margin-right: 4px; }
.nrow.top .n-ico svg { margin-left: 0; }
.gap { margin-top: 12.500px; }
.gap2 { margin-top: 11.500px; }
.nrow.sel { background: #d9d9d9; }
.n-pin { margin-left: auto; margin-right: 4px; }

.content { flex: 1; min-width: 0; }
.colhead { height: 49px; padding-top: 8px; display: flex; }
.hc { height: 41px; border-right: 1px solid #e5e5e5; display: flex; align-items: center; color: #4c607a; padding-bottom: 3px; position: relative; }
.hc-name { width: 408px; padding-left: 17px; }
.hc-date { width: 180px; padding-left: 9px; }
.hc-type { width: 180px; padding-left: 10px; }
.hc-size { width: 120px; padding-left: 10px; }
.hc-text { white-space: nowrap; }
.box-head { margin-right: 16px; }
.sort { position: absolute; left: 206px; top: 1px; }
.box { width: 20px; height: 20px; flex: none; border: 1px solid #333; background: #fff; display: block; }
.hide { visibility: hidden; }

.list { margin: 9px 0 0 21px; width: 861px; }
.frow { height: 31.850px; display: grid; grid-template-columns: 396px 181px 1fr; align-items: center; }
.picked { background: #d9d9d9; box-shadow: 0 -1px 0 #d9d9d9; }
.fname { display: flex; align-items: center; padding-left: 6px; color: #111; }
.fico { margin: 0 12px 0 7px; }
.fdate { font-size: 18px; letter-spacing: 0; word-spacing: 0; color: #6d6d6d; white-space: nowrap; }
.ftype { color: #6d6d6d; }

/* status */
.status { height: 36px; flex: none; border-bottom: 1px solid #e5e5e5; display: flex; align-items: center; color: #3c4d66; }
.st-item { white-space: nowrap; margin-left: 15px; padding-bottom: 2px; }
.st-first { margin-left: 22px; }
.st-sep { width: 2px; height: 17px; background: #efefef; margin-left: 17px; }
.st-view { display: flex; align-items: center; justify-content: center; height: 35px; flex: none; }
.st-view.on { width: 32px; margin-left: 1674px; background: #cbe8f6; border: 2px solid #26a0da; }
.st-view:last-child { margin-left: 4px; width: 22px; }

/* dialog */
.dialog { position: absolute; left: 1225px; top: 468px; width: 597px; height: 847px; background: #f0f0f0; border: 1px solid #74b6f8; display: flex; flex-direction: column; }
.d-title { height: 44px; flex: none; background: #74b6fb; display: flex; align-items: center; padding-left: 12px; }
.d-title-text { margin-left: 10px; }
.d-close { margin-left: auto; margin-right: 16px; }
.d-tabs { height: 46px; flex: none; display: flex; align-items: flex-end; padding-left: 9px; position: relative; z-index: 1; }
.d-tab { width: 105px; height: 31px; border: 1px solid #d9d9d9; display: flex; align-items: center; justify-content: center; background: #f0f0f0; white-space: nowrap; }
.d-tab.active { width: 64px; height: 34px; background: #fff; border-bottom-color: #fff; border-right: 0; margin-bottom: -1px; padding-right: 6px; }
.d-panel { width: 573px; height: 685px; margin-left: 9px; flex: none; background: #fff; border: 1px solid #d9d9d9; padding: 24px 20px 0 21px; }
.d-head { height: 77px; display: flex; align-items: flex-start; }
.d-big { margin-left: 5px; }
.d-count { margin: 9px 0 0 73px; line-height: 26px; white-space: nowrap; }
.d-count .lat, .d-row .lat { font-size: 17.500px; }
.d-check-t .lat, .btn .lat { font-size: 16.500px; }
.d-line { height: 1px; background: #a0a0a0; }
.d-props { padding-top: 11px; }
.d-row { height: 50.300px; display: flex; align-items: center; white-space: nowrap; }
.d-k { width: 161px; flex: none; }
.d-line2 { margin-top: 11px; }
.d-attrs { display: flex; padding-top: 29px; }
.d-attr-label { width: 122px; line-height: 16px; flex: none; }
.d-checks { display: flex; flex-direction: column; gap: 24px; }
.d-check { height: 20px; display: flex; align-items: center; }
.d-check-t { margin: 4px 0 0 6px; white-space: nowrap; line-height: 20px; }
.d-btns { display: flex; justify-content: flex-end; gap: 12px; margin-top: 18px; padding-right: 10px; }
.btn { width: 123px; height: 42px; padding-bottom: 2px; background: #e1e1e1; border: 1px solid #adadad; display: flex; align-items: center; justify-content: center; white-space: nowrap; }
.btn.primary { border: 3px solid #0078d7; }
.btn.disabled { background: #ccc; border-color: #bfbfbf; color: #838383; }

/* taskbar */
.taskbar { width: 140px; height: 1440px; flex: none; background: #429dfa; display: flex; flex-direction: column; color: #dcecff; }
.tb { height: 70px; margin-bottom: 2px; display: flex; align-items: center; justify-content: center; position: relative; flex: none; }
.tb-win { height: 60px; margin-bottom: 0; }
.tb-task { height: 60px; margin-bottom: 5px; }
.tb-store { margin-top: -1px; margin-bottom: 3px; }
.run::after { content: ""; position: absolute; right: 0; top: 6px; bottom: 6px; width: 3px; background: #9ccbfc; }
.active { background: #5eabfb; }
.active::after { top: 0; bottom: 0; }
.tray { margin-top: 100px; padding-left: 8px; display: grid; grid-template-columns: 48px 48px; grid-auto-rows: 48px; flex: none; }
.t-cell { display: flex; align-items: center; justify-content: center; }
.t-single { height: 58px; flex: none; display: flex; align-items: center; justify-content: center; }
.t-pen { margin-top: 2px; }
.t-pad { margin-top: 3px; }
.ime { display: flex; gap: 20px; padding-left: 30px; margin-top: 14px; height: 24px; flex: none; }
.ime-han { width: 24px; height: 24px; background: #fff; border: 1px solid #24446c; color: #000; display: flex; align-items: center; justify-content: center; font-size: 17px; letter-spacing: 0; }
.clock { margin-top: 34px; display: flex; flex-direction: column; align-items: center; flex: none; }
.clock span { height: 29px; line-height: 29px; letter-spacing: .3px; }
.notif { margin: 30px 0 0 58px; }
.tb-line { margin-top: 24px; height: 2px; background: #9ecbfb; flex: none; }
```
